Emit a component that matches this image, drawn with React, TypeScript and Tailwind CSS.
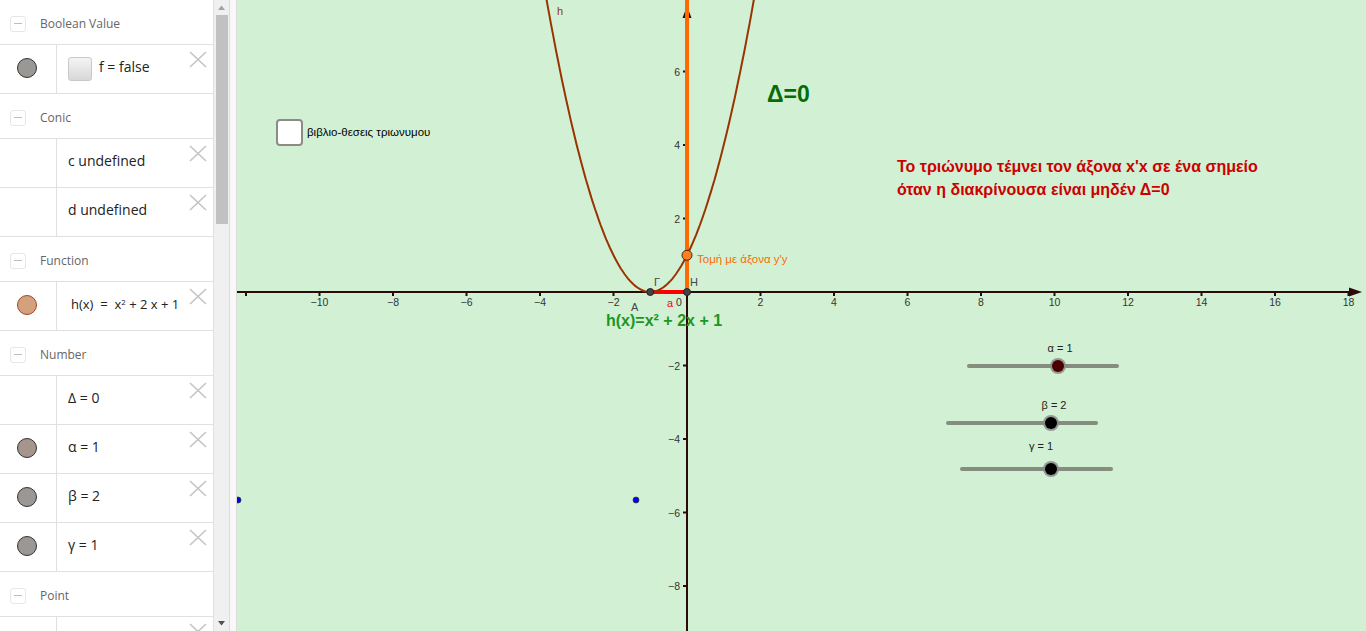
import React from "react";

const OX = 687;
const OY = 292;
const U = 36.75;
const px = (x: number) => OX + x * U;
const py = (y: number) => OY - y * U;

function CloseX() {
  return (
    <svg width="18" height="17" viewBox="0 0 18 17" className="absolute right-[6px] top-[6px]">
      <path d="M1 1 L17 16 M17 1 L1 16" stroke="#c4c4c4" strokeWidth="1.6" />
    </svg>
  );
}

function Header({ title }: { title: string }) {
  return (
    <div className="h-[45px] shrink-0 border-b border-[#e0e0e0] flex items-center pt-[3px]">
      <div className="ml-[10px] w-[16px] h-[16px] rounded-[3px] border border-[#e6e6e6] flex items-center justify-center">
        <div className="w-[8px] h-[1.5px] bg-[#bdbdbd]" />
      </div>
      <span className="ml-[14px] text-[12px] text-[#666]" style={{ fontFamily: '"Open Sans", sans-serif' }}>
        {title}
      </span>
    </div>
  );
}

function Row({
  dot,
  children,
}: {
  dot?: "gray" | "orange" | "grayred";
  children: React.ReactNode;
}) {
  let dotCls = "";
  if (dot === "gray") dotCls = "bg-[#9a9794] border-[#333]";
  if (dot === "grayred") dotCls = "bg-[#a6958c] border-[#333]";
  if (dot === "orange") dotCls = "bg-[#d4a17e] border-[#9c4a1c]";
  return (
    <div className="relative h-[49px] shrink-0 border-b border-[#e0e0e0] flex">
      <div className="w-[57px] shrink-0 border-r border-[#e0e0e0] flex items-center justify-center pr-[3px] pb-[3px]">
        {dot && <div className={`w-[20px] h-[20px] rounded-full border ${dotCls}`} />}
      </div>
      <div
        className="flex-1 flex items-center pl-[11px] pb-[5px] text-[14px] text-[#222]"
        style={{ fontFamily: '"Open Sans", sans-serif' }}
      >
        {children}
      </div>
      <CloseX />
    </div>
  );
}

function Sidebar() {
  return (
    <div className="flex h-[631px] shrink-0 bg-white">
      <div className="w-[214px] border-r border-[#e0e0e0] flex flex-col overflow-hidden">
        <Header title="Boolean Value" />
        <Row dot="gray">
          <div className="w-[24px] h-[24px] rounded-[3px] border border-[#c8c8c8] bg-gradient-to-b from-[#f4f4f4] to-[#d8d8d8] mr-[7px] mt-[4px]" />
          <span>f&nbsp;=&nbsp;false</span>
        </Row>
        <Header title="Conic" />
        <Row>
          <span>c&nbsp;undefined</span>
        </Row>
        <Row>
          <span>d&nbsp;undefined</span>
        </Row>
        <Header title="Function" />
        <Row dot="orange">
          <span className="ml-[3px] text-[13px] mt-[2px]">
            h(x)&nbsp;&nbsp;=&nbsp;&nbsp;x<sup className="text-[8px]">2</sup>&nbsp;+&nbsp;2&nbsp;x&nbsp;+&nbsp;1
          </span>
        </Row>
        <Header title="Number" />
        <Row>
          <span>Δ&nbsp;=&nbsp;0</span>
        </Row>
        <Row dot="grayred">
          <span>α&nbsp;=&nbsp;1</span>
        </Row>
        <Row dot="gray">
          <span>β&nbsp;=&nbsp;2</span>
        </Row>
        <Row dot="gray">
          <span>γ&nbsp;=&nbsp;1</span>
        </Row>
        <Header title="Point" />
        <Row>
          <span />
        </Row>
      </div>
      <div className="w-[15px] bg-[#f0f0f0] flex flex-col items-center">
        <svg width="15" height="15" viewBox="0 0 15 15">
          <path d="M4 10 L7.5 5.5 L11 10 Z" fill="#a3a3a3" />
        </svg>
        <div className="w-[12px] h-[209px] bg-[#c1c1c1]" />
        <div className="flex-1" />
        <svg width="15" height="15" viewBox="0 0 15 15">
          <path d="M4 5 L7.5 9.5 L11 5 Z" fill="#505050" />
        </svg>
      </div>
      <div className="w-[8px] border-l border-r border-[#dcdcdc] bg-[#f8f8f8]" />
    </div>
  );
}

function Graph() {
  const xTicks: number[] = [];
  for (let n = -12; n <= 18; n += 2) if (n !== 0) xTicks.push(n);
  const yTicks = [6, 4, 2, -2, -4, -6, -8];
  const pts: string[] = [];
  for (let x = -3.95; x <= 1.95; x += 0.05) {
    const y = (x + 1) * (x + 1);
    pts.push(`${px(x).toFixed(1)},${py(y).toFixed(1)}`);
  }
  const fmt = (n: number) => (n < 0 ? `\u2212${-n}` : `${n}`);
  const slider = (x1: number, x2: number, y: number, k: number, fill: string) => (
    <g>
      <line x1={x1} y1={y} x2={x2} y2={y} stroke="#848d7e" strokeWidth="4" strokeLinecap="round" />
      <circle cx={k} cy={y} r="8" fill="#8a8a8a" opacity="0.85" />
      <circle cx={k} cy={y} r="6" fill={fill} />
    </g>
  );
  return (
    <div className="relative flex-1 h-[631px] bg-[#d2f1d4] overflow-hidden" style={{ fontFamily: '"Liberation Sans", Arial, sans-serif' }}>
      <svg className="absolute inset-0" width="1129" height="631" viewBox="237 0 1129 631">
        {/* x axis */}
        <line x1="237" y1={OY} x2="1352" y2={OY} stroke="#2b0a0a" strokeWidth="2" />
        <path d={`M1349 ${OY - 4.5} L1362 ${OY} L1349 ${OY + 4.5} Z`} fill="#2b0a0a" />
        {/* y axis */}
        <line x1={OX} y1="631" x2={OX} y2="14" stroke="#2b0a0a" strokeWidth="2" />
        <path d={`M${OX - 4.5} 18 L${OX} 6 L${OX + 4.5} 18 Z`} fill="#2b0a0a" />
        {xTicks.map((n) => (
          <g key={`x${n}`}>
            <line x1={px(n)} y1={OY} x2={px(n)} y2={OY + 4} stroke="#2b0a0a" strokeWidth="2" />
            {n > -12 && (
              <text x={px(n)} y={OY + 14} fontSize="10.5" fill="#333" textAnchor="middle">
                {fmt(n)}
              </text>
            )}
          </g>
        ))}
        {yTicks.map((n) => (
          <g key={`y${n}`}>
            <line x1={OX - 4} y1={py(n)} x2={OX} y2={py(n)} stroke="#2b0a0a" strokeWidth="2" />
            <text x={OX - 7} y={py(n) + 4} fontSize="10.5" fill="#333" textAnchor="end">
              {fmt(n)}
            </text>
          </g>
        ))}
        <text x={OX - 11} y={OY + 14} fontSize="10.5" fill="#333">0</text>
        {/* orange line on y axis */}
        <line x1={OX} y1={OY} x2={OX} y2="0" stroke="#ff6a00" strokeWidth="4" />
        {/* red segment */}
        <line x1={px(-1)} y1={OY} x2={OX} y2={OY} stroke="#ff0000" strokeWidth="4" />
        {/* parabola */}
        <polyline points={pts.join(" ")} fill="none" stroke="#993300" strokeWidth="2" />
        {/* points */}
        <circle cx={px(-1)} cy={OY} r="3.5" fill="#444" stroke="#222" strokeWidth="1" />
        <circle cx={OX} cy={OY} r="3.5" fill="#444" stroke="#222" strokeWidth="1" />
        <circle cx={OX} cy={py(1)} r="5" fill="#ff7f1e" stroke="#3a2a20" strokeWidth="1" />
        <circle cx="238" cy="500" r="3" fill="#0000ff" stroke="#333" strokeWidth="0.8" />
        <circle cx="636" cy="500" r="3" fill="#0000ff" stroke="#333" strokeWidth="0.8" />
        {/* labels */}
        <text x="557" y="15" fontSize="11" fill="#993300">h</text>
        <text x="654" y="286" fontSize="11" fill="#444">Γ</text>
        <text x="690" y="286" fontSize="11" fill="#444">Η</text>
        <text x="631" y="311" fontSize="11" fill="#444">A</text>
        <text x="667" y="307" fontSize="11" fill="#ff0000">a</text>
        <text x="697" y="263" fontSize="11.5" fill="#ff6a00">Τομή με άξονα y'y</text>
        {/* sliders */}
        {slider(969, 1117, 366, 1058, "#4a0000")}
        {slider(948, 1096, 423, 1051, "#000")}
        {slider(962, 1111, 469, 1051, "#000")}
        <text x="1060" y="352" fontSize="11" fill="#222" textAnchor="middle">α = 1</text>
        <text x="1054" y="409" fontSize="11" fill="#222" textAnchor="middle">β = 2</text>
        <text x="1041" y="450" fontSize="11" fill="#222" textAnchor="middle">γ = 1</text>
      </svg>

      {/* checkbox */}
      <div className="absolute left-[39px] top-[119px] flex items-center">
        <div className="w-[27px] h-[27px] rounded-[4px] border-2 border-[#8c8c84] bg-white" />
        <span className="ml-[4px] text-[11.5px] text-black">βιβλιο-θεσεις τριωνυμου</span>
      </div>

      <div className="absolute left-[530px] top-[83px] text-[23px] font-bold text-[#066d06] leading-none">Δ=0</div>

      <div className="absolute left-[660px] top-[155px] text-[16px] font-bold text-[#cc0000] leading-[23px]">
        <div>Το τριώνυμο τέμνει τον άξονα x'x σε ένα σημείο</div>
        <div>όταν η διακρίνουσα είναι μηδέν Δ=0</div>
      </div>

      <div className="absolute left-[369px] top-[313px] text-[16px] font-bold text-[#1e961e] leading-none">
        h(x)=x² + 2x + 1
      </div>
    </div>
  );
}

export default function App() {
  return (
    <div className="flex w-[1366px] h-[631px] overflow-hidden">
      <Sidebar />
      <Graph />
    </div>
  );
}
